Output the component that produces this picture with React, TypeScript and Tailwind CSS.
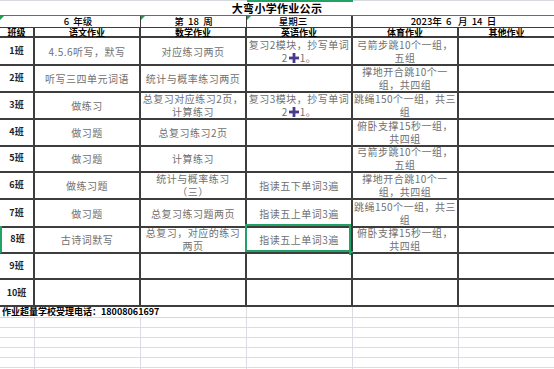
import React from "react";

const COLS = "grid grid-cols-[35px_106px_106px_106px_106px_95px]";
const LINE = "border-[#3d3d3d]";

const Plus = () => (
  <svg width="10" height="10" viewBox="0 0 10 10" className="inline-block align-[-1px] mx-[1px]">
    <rect x="3.6" y="0" width="2.8" height="10" fill="#4a3a8c" />
    <rect x="0" y="3.6" width="10" height="2.8" fill="#4a3a8c" />
  </svg>
);

const Corner = () => (
  <span className="absolute left-0 top-0 w-0 h-0 border-t-[4px] border-r-[4px] border-t-[#1f9d55] border-r-transparent" />
);

type Row = { h: string; label: string; cells: React.ReactNode[]; selected?: boolean };

const rows: Row[] = [
  {
    h: "h-[27px]",
    label: "1",
    cells: [
      "4.5.6听写，默写",
      "对应练习两页",
      <>复习2模块，抄写单词<br />2<Plus />1。</>,
      <>弓箭步跳10个一组，<br />五组</>,
      "",
    ],
  },
  {
    h: "h-[27px]",
    label: "2",
    cells: ["听写三四单元词语", "统计与概率练习两页", "", <>撑地开合跳10个一<br />组，共四组</>, ""],
  },
  {
    h: "h-[27px]",
    label: "3",
    cells: [
      "做练习",
      <>总复习对应练习2页，<br />计算练习</>,
      <>复习3模块，抄写单词<br />2<Plus />1。</>,
      <>跳绳150个一组，共三<br />组</>,
      "",
    ],
  },
  {
    h: "h-[26px]",
    label: "4",
    cells: ["做习题", "总复习练习2页", "", <>俯卧支撑15秒一组，<br />共四组</>, ""],
  },
  {
    h: "h-[27px]",
    label: "5",
    cells: ["做习题", "计算练习", "", <>弓箭步跳10个一组，<br />五组</>, ""],
  },
  {
    h: "h-[28px]",
    label: "6",
    cells: ["做练习题", <>统计与概率练习<br />（三）</>, "指读五下单词3遍", <>撑地开合跳10个一<br />组，共四组</>, ""],
  },
  {
    h: "h-[26px]",
    label: "7",
    cells: ["做习题", "总复习练习题两页", "指读五上单词3遍", <>跳绳150个一组，共三<br />组</>, ""],
  },
  {
    h: "h-[27px]",
    label: "8",
    selected: true,
    cells: ["古诗词默写", <>总复习，对应的练习<br />两页</>, "指读五上单词3遍", <>俯卧支撑15秒一组，<br />共四组</>, ""],
  },
  { h: "h-[27px]", label: "9", cells: ["", "", "", "", ""] },
  { h: "h-[27px]", label: "10", cells: ["", "", "", "", ""] },
];

const headers = ["班级", "语文作业", "数学作业", "英语作业", "体育作业", "其他作业"];

const App = () => {
  return (
    <div
      className="w-[554px] h-[369px] overflow-hidden bg-white text-black"
      style={{ fontFamily: '"Noto Sans CJK SC", "Liberation Sans", sans-serif' }}
    >
      {/* Title */}
      <div className="relative h-[16px] border-t border-b border-t-[#d6d9e0] border-b-[#6b6b6b] flex items-center justify-center">
        <span className="absolute left-[247px] top-[-1px] w-[106px] h-[2px] bg-[#21a366]" />
        <span className="text-[11px] font-semibold tracking-[0.3px] leading-[12px]">大弯小学作业公示</span>
      </div>

      {/* Grade / week / date */}
      <div className={`${COLS} h-[12px] border-b ${LINE} text-[9.5px] leading-[10px] font-medium`}>
        <div className={`relative col-span-2 border-r ${LINE} flex items-center justify-center pl-[16px] pb-[1px]`}>
          <Corner />
          6&nbsp;&nbsp;年级
        </div>
        <div className={`relative border-r ${LINE} flex items-center justify-center pb-[1px]`}>
          <Corner />
          第&nbsp;&nbsp;18&nbsp;&nbsp;周
        </div>
        <div className={`relative border-r-2 ${LINE} flex items-center justify-center pr-[12px] pb-[1px]`}>
          <Corner />
          星期三
        </div>
        <div className="col-span-2 flex items-center justify-center pb-[1px]">
          2023年&nbsp;&nbsp;6&nbsp;&nbsp;&nbsp;月&nbsp;&nbsp;14&nbsp;&nbsp;日
        </div>
      </div>

      {/* Column headers */}
      <div className={`${COLS} h-[10px] border-b-2 ${LINE} text-[9px] leading-[8px] font-bold`}>
        {headers.map((h, i) => (
          <div
            key={h}
            className={`flex items-center justify-center pt-[1px] ${i < 5 ? `border-r-2 ${LINE}` : ""}`}
          >
            {h}
          </div>
        ))}
      </div>

      {/* Class rows */}
      {rows.map((r) => (
        <div key={r.label} className={`${COLS} ${r.h}`}>
          <div
            className={`flex items-center justify-center border-r-2 border-b-2 ${LINE} text-[9px] font-bold text-[#222] ${
              r.selected ? "border-l-2 border-l-[#21a366]" : ""
            }`}
          >
            {r.label}班
          </div>
          {r.cells.map((c, i) => (
            <div
              key={i}
              className={`relative flex items-center justify-center text-center border-b-2 ${LINE} ${
                i < 4 ? "border-r-2" : ""
              } text-[10px] leading-[13px] tracking-[0.5px] text-[#707070] whitespace-nowrap`}
            >
              <div>{c}</div>
              {r.selected && i === 2 && (
                <>
                  <span className="absolute -left-[2px] -top-[2px] right-0 bottom-0 border-2 border-[#21a366]" />
                  <span className="absolute -right-[2px] -bottom-[3px] w-[4px] h-[4px] bg-[#21a366]" />
                </>
              )}
            </div>
          ))}
        </div>
      ))}

      {/* Footer */}
      <div className="flex h-[11px] border-b border-[#d5d8e2]">
        <div className="w-[247px] border-r border-[#dcdce3] flex items-center pl-[2px] text-[9px] font-bold leading-[10px] whitespace-nowrap">
          作业超量学校受理电话：18008061697
        </div>
        <div className="w-[106px] border-r border-[#dcdce3]" />
        <div className="w-[106px] border-r border-[#dcdce3]" />
        <div className="w-[95px]" />
      </div>

      {/* Empty sheet grid */}
      {[0, 1, 2, 3, 4, 5].map((n) => (
        <div key={n} className={`${COLS} h-[10px]`}>
          {[0, 1, 2, 3, 4, 5].map((c) => (
            <div
              key={c}
              className={`border-b border-[#dcdce3] ${c < 5 ? "border-r" : ""}`}
            />
          ))}
        </div>
      ))}
    </div>
  );
};

export default App;
